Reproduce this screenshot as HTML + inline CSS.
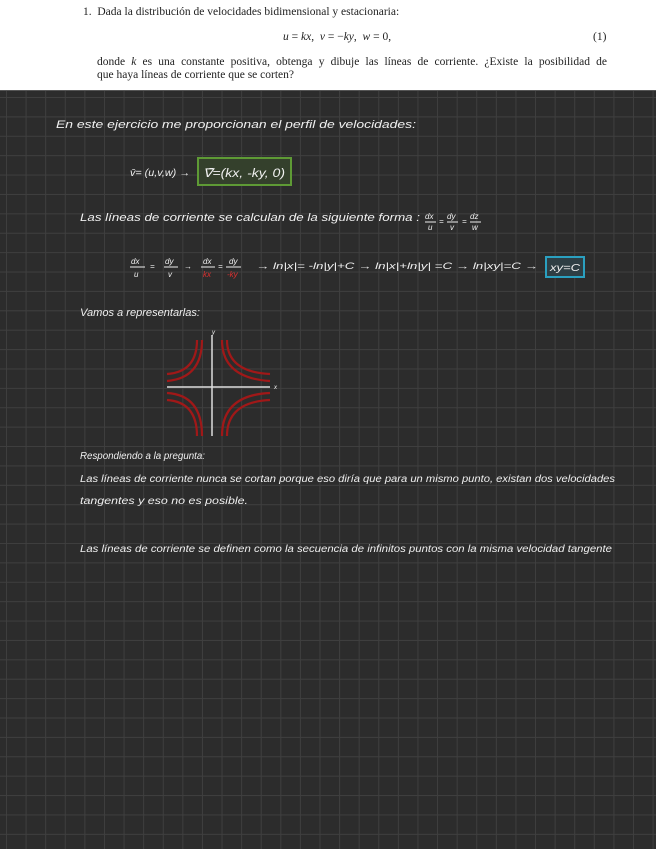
<!DOCTYPE html>
<html><head><meta charset="utf-8"><style>
body{margin:0;width:656px;height:848px;overflow:hidden;background:#fff;font-family:"Liberation Serif",serif}
.top{position:absolute;left:0;top:0;width:656px;height:90px;background:#fff;color:#222;font-size:11.5px}
.top div{position:absolute;white-space:nowrap}
.dark{position:absolute;left:0;top:90px;width:656px;height:758px;background-color:#2c2c2c;
background-image:linear-gradient(#3f3f3f 1px,transparent 1px),linear-gradient(90deg,#3f3f3f 1px,transparent 1px);
background-size:19.6px 19.4px;background-position:6px 6px;border-top:1px solid #555}
svg{position:absolute;left:0;top:0}
text{font-family:"Liberation Sans",sans-serif;fill:#f0f0f0;font-style:italic}
</style></head><body>
<div class="top">
<div style="left:83px;top:6px">1.&nbsp; Dada la distribución de velocidades bidimensional y estacionaria:</div>
<div style="left:283px;top:31px"><i>u</i> = <i>kx</i>,&nbsp; <i>v</i> = −<i>ky</i>,&nbsp; <i>w</i> = 0,</div>
<div style="left:593px;top:31px">(1)</div>
<div style="left:97px;top:56px;width:510px;text-align:justify;text-align-last:justify;white-space:normal">donde <i>k</i> es una constante positiva, obtenga y dibuje las líneas de corriente. ¿Existe la posibilidad de</div>
<div style="left:97px;top:69px">que haya líneas de corriente que se corten?</div>
</div>
<div class="dark"></div>
<svg width="656" height="848">
<g font-size="11">
<text x="56" y="128" textLength="360" lengthAdjust="spacingAndGlyphs">En este ejercicio  me  proporcionan  el  perfil de  velocidades:</text>
<text x="130" y="176" textLength="60" lengthAdjust="spacingAndGlyphs" font-size="10">v̄= (u,v,w) →</text>
<rect x="198" y="158" width="93" height="27" fill="#34402c" stroke="#5e9a35" stroke-width="2"/>
<text x="203" y="177" textLength="82" lengthAdjust="spacingAndGlyphs" font-size="12">∇̄=(kx, -ky, 0)</text>
<text x="80" y="221" textLength="340" lengthAdjust="spacingAndGlyphs">Las líneas  de  corriente  se  calculan  de  la  siguiente  forma :</text>
<g font-size="8">
<text x="425" y="219">dx</text><text x="447" y="219">dy</text><text x="470" y="219">dz</text>
<text x="428" y="230">u</text><text x="450" y="230">v</text><text x="472" y="230">w</text>
<text x="439" y="224">=</text><text x="462" y="224">=</text>
</g>
<line x1="425" y1="222" x2="436" y2="222" stroke="#eee"/><line x1="447" y1="222" x2="458" y2="222" stroke="#eee"/><line x1="470" y1="222" x2="481" y2="222" stroke="#eee"/>
<g font-size="8">
<text x="131" y="264">dx</text><text x="165" y="264">dy</text><text x="203" y="264">dx</text><text x="229" y="264">dy</text>
<text x="134" y="277">u</text><text x="168" y="277">v</text>
<text x="203" y="277" style="fill:#e03030">kx</text><text x="227" y="277" style="fill:#e03030">-ky</text>
<text x="150" y="269">=</text><text x="184" y="269">→</text><text x="218" y="269">=</text>
</g>
<line x1="130" y1="267" x2="145" y2="267" stroke="#eee"/><line x1="164" y1="267" x2="178" y2="267" stroke="#eee"/>
<line x1="201" y1="267" x2="215" y2="267" stroke="#eee"/><line x1="226" y1="267" x2="241" y2="267" stroke="#eee"/>
<text x="256" y="269" textLength="282" lengthAdjust="spacingAndGlyphs" font-size="9">→ ln|x|= -ln|y|+C → ln|x|+ln|y| =C  → ln|xy|=C  →</text>
<rect x="546" y="257" width="38" height="20" fill="#2e3e44" stroke="#2aa0c0" stroke-width="2"/>
<text x="550" y="271" font-size="10" textLength="30" lengthAdjust="spacingAndGlyphs">xy=C</text>
<text x="80" y="316" textLength="120" lengthAdjust="spacingAndGlyphs">Vamos  a  representarlas:</text>
</g>
<g fill="none" stroke="#a01818" stroke-width="2.2">
<path d="M197 340 Q197 372 167 374"/><path d="M202 340 Q202 378 167 381"/>
<path d="M227 340 Q227 372 270 374"/><path d="M222 340 Q222 378 270 381"/>
<path d="M197 436 Q197 402 167 400"/><path d="M202 436 Q202 395 167 393"/>
<path d="M227 436 Q227 402 270 400"/><path d="M222 436 Q222 395 270 393"/>
</g>
<line x1="212" y1="335" x2="212" y2="436" stroke="#ddd" stroke-width="1.5"/>
<line x1="167" y1="387" x2="270" y2="387" stroke="#ddd" stroke-width="1.5"/>
<text x="212" y="334" font-size="6">y</text><text x="274" y="389" font-size="6">x</text>
<g font-size="10">
<text x="80" y="459" textLength="125" lengthAdjust="spacingAndGlyphs">Respondiendo  a  la  pregunta:</text>
<text x="80" y="482" textLength="535" lengthAdjust="spacingAndGlyphs">Las  líneas de corriente  nunca se  cortan porque  eso  diría  que  para  un  mismo  punto, existan  dos  velocidades</text>
<text x="80" y="504" textLength="168" lengthAdjust="spacingAndGlyphs">tangentes   y  eso   no  es   posible.</text>
<text x="80" y="552" textLength="532" lengthAdjust="spacingAndGlyphs">Las  líneas  de  corriente  se  definen  como la  secuencia  de  infinitos  puntos  con  la  misma  velocidad  tangente</text>
</g>
</svg>
</body></html>
